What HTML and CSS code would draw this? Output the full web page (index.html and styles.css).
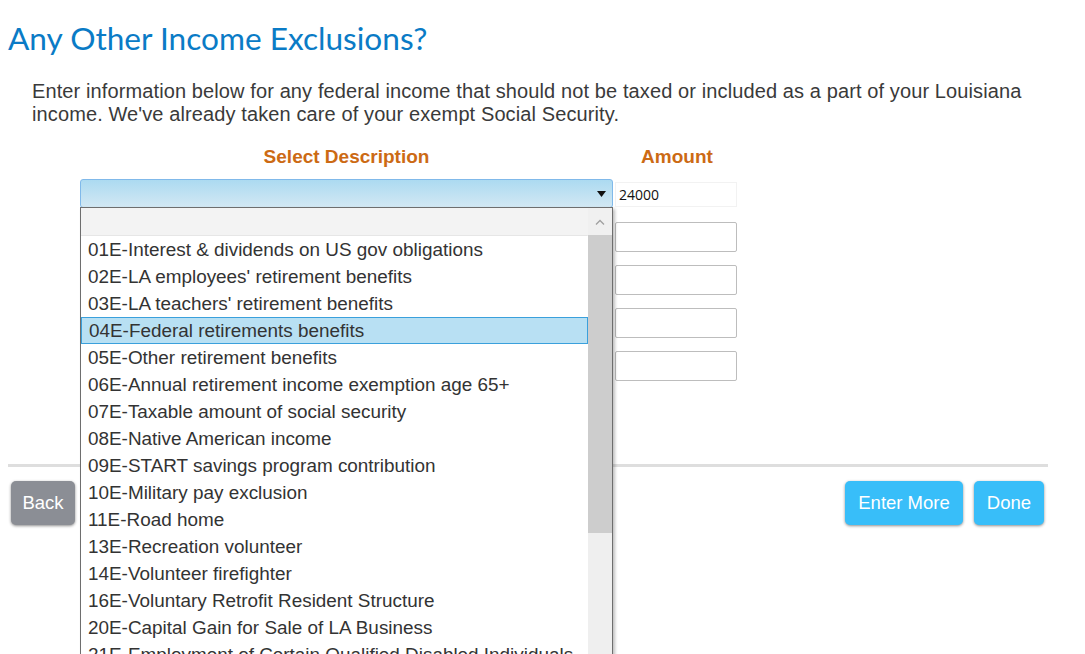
FILE: index.html
```html
<!DOCTYPE html>
<html lang="en">
<head>
<meta charset="utf-8">
<title>Any Other Income Exclusions?</title>
<link rel="stylesheet" href="styles.css">
</head>
<body>
<div class="page">
  <h1 class="title">Any Other Income Exclusions?</h1>
  <p class="intro">Enter information below for any federal income that should not be taxed or included as a part of your Louisiana income. We've already taken care of your exempt Social Security.</p>

  <div class="form">
    <div class="col-head desc-head">Select Description</div>
    <div class="col-head amt-head">Amount</div>

    <div class="select-cell">
      <div class="select open">
        <svg class="arrow" width="9" height="6" viewBox="0 0 9 6"><path d="M0 0H9L4.5 6Z" fill="#111"/></svg>
      </div>
      <div class="dropdown">
        <div class="list">
          <div class="opt blank"></div>
          <div class="opt">01E-Interest &amp; dividends on US gov obligations</div>
          <div class="opt">02E-LA employees' retirement benefits</div>
          <div class="opt">03E-LA teachers' retirement benefits</div>
          <div class="opt hl">04E-Federal retirements benefits</div>
          <div class="opt">05E-Other retirement benefits</div>
          <div class="opt">06E-Annual retirement income exemption age 65+</div>
          <div class="opt">07E-Taxable amount of social security</div>
          <div class="opt">08E-Native American income</div>
          <div class="opt">09E-START savings program contribution</div>
          <div class="opt">10E-Military pay exclusion</div>
          <div class="opt">11E-Road home</div>
          <div class="opt">13E-Recreation volunteer</div>
          <div class="opt">14E-Volunteer firefighter</div>
          <div class="opt">16E-Voluntary Retrofit Resident Structure</div>
          <div class="opt">20E-Capital Gain for Sale of LA Business</div>
          <div class="opt">21E-Employment of Certain Qualified Disabled Individuals</div>
        </div>
        <div class="scrollbar">
          <div class="sb-up"><svg width="10" height="6" viewBox="0 0 10 6"><path d="M1 5.5L5 1.5L9 5.5" fill="none" stroke="#a0a0a0" stroke-width="1.3"/></svg></div>
          <div class="sb-thumb"></div>
          <div class="sb-track"></div>
        </div>
      </div>
    </div>
    <div class="amt-cell"><input class="amount first" type="text" value="24000"></div>

    <div class="select-cell"></div>
    <div class="amt-cell"><input class="amount" type="text"></div>
    <div class="select-cell"></div>
    <div class="amt-cell"><input class="amount" type="text"></div>
    <div class="select-cell"></div>
    <div class="amt-cell"><input class="amount" type="text"></div>
    <div class="select-cell"></div>
    <div class="amt-cell"><input class="amount" type="text"></div>
  </div>

  <hr class="divider">

  <div class="actions">
    <button class="btn btn-back">Back</button>
    <div class="right-btns">
      <button class="btn btn-blue">Enter More</button>
      <button class="btn btn-blue">Done</button>
    </div>
  </div>
</div>
</body>
</html>
```

FILE: styles.css
```css
body {
  margin: 0;
  padding: 0;
  background: #fff;
  font-family: "Liberation Sans", Arial, sans-serif;
  color: #333;
}
.page {
  box-sizing: border-box;
  height: 654px;
  overflow: hidden;
  padding: 0 37px 0 8px;
}
.title {
  margin: 0;
  padding-top: 19px;
  font-family: Lato, "Noto Sans", sans-serif;
  font-weight: 400;
  font-size: 31.6px;
  line-height: 38px;
  color: #0a7bc6;
}
.intro {
  margin: 23px 0 0 24px;
  font-size: 20px;
  letter-spacing: 0.11px;
  line-height: 23px;
  color: #3a3a3a;
}
.form {
  margin: 21px 0 0 72px;
  display: grid;
  grid-template-columns: 533px 124px;
  column-gap: 2px;
  align-items: start;
}
.col-head {
  font-family: "Liberation Sans Narrow", "Liberation Sans", Arial, sans-serif;
  font-weight: 700;
  font-size: 19px;
  color: #cc6a14;
  text-align: center;
  height: 32px;
  line-height: 20px;
}
.select-cell {
  position: relative;
  height: 43px;
}
.select {
  box-sizing: border-box;
  height: 29px;
  border: 1px solid #80b9ea;
  border-radius: 3px;
  background: linear-gradient(#acdaf1, #d2e8f3);
  display: flex;
  align-items: center;
  justify-content: flex-end;
  padding-right: 6px;
}
.amt-cell {
  height: 43px;
}
.amount {
  box-sizing: border-box;
  width: 122px;
  height: 30px;
  margin: 0;
  border: 1px solid #bdbdbd;
  border-radius: 2px;
  padding: 0 3px;
  font-family: "Open Sans", "DejaVu Sans", sans-serif;
  font-size: 14px;
  color: #111;
  background: #fff;
  outline: none;
}
.amount.first {
  height: 25px;
  margin-top: 3px;
  border-color: #f2f2f2;
  border-radius: 0;
}
.dropdown {
  position: absolute;
  z-index: 5;
  left: 0;
  top: 28px;
  width: 533px;
  height: 470px;
  box-sizing: border-box;
  border: 1px solid #6e6e6e;
  background: #fff;
  display: flex;
  box-shadow: 2px 2px 3px rgba(0, 0, 0, 0.25);
  overflow: hidden;
}
.list {
  flex: 1;
  min-width: 0;
}
.opt {
  box-sizing: border-box;
  height: 27px;
  line-height: 26px;
  padding-left: 7px;
  font-size: 18.9px;
  color: #333;
  white-space: nowrap;
  border: 1px solid transparent;
  border-left: 0;
}
.opt.blank {
  height: 28px;
  background: #f3f3f3;
  border-bottom: 1px solid #e6e6e6;
}
.opt.hl {
  background: #b8e0f3;
  border: 1px solid #3aa0dc;
}
.scrollbar {
  width: 24px;
  display: flex;
  flex-direction: column;
  background: #efefef;
}
.sb-up {
  height: 27px;
  display: flex;
  align-items: center;
  justify-content: center;
  background: #f0f0f0;
}
.sb-thumb {
  height: 298px;
  background: #cdcdcd;
}
.sb-track {
  flex: 1;
  background: #efefef;
}
.divider {
  margin: 70px 0 0 0;
  border: 0;
  height: 3px;
  background: #dedede;
}
.actions {
  margin-top: 14px;
  display: flex;
  justify-content: space-between;
  padding-left: 3px;
  padding-right: 4px;
}
.right-btns {
  display: flex;
  gap: 11px;
}
.btn {
  height: 44px;
  border: 0;
  border-radius: 5px;
  padding: 0 13px;
  font-family: "Liberation Sans", Arial, sans-serif;
  font-size: 18.5px;
  color: #fff;
  box-shadow: 0 1px 3px rgba(0, 0, 0, 0.45);
}
.btn-back {
  background: #8b8e95;
  width: 64px;
  padding: 0;
}
.btn-blue {
  background: #38bef9;
}
```
